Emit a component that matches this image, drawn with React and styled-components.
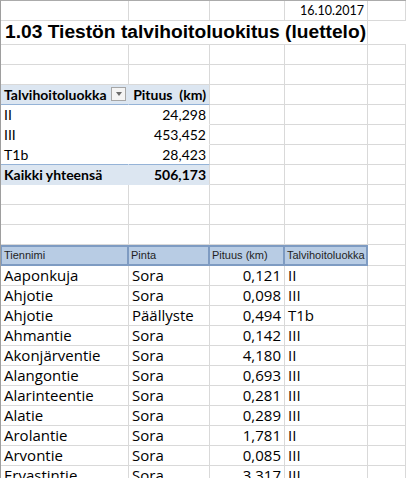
import styled, { createGlobalStyle } from "styled-components";

const GlobalStyle = createGlobalStyle`
  html, body {
    margin: 0;
    padding: 0;
    background: #fff;
    overflow: hidden;
  }
`;

const Sheet = styled.div`
  width: 406px;
  height: 478px;
  overflow: hidden;
  border-top: 1px solid #ababab;
  border-left: 1px solid #9e9e9e;
  box-sizing: border-box;
  font-family: Lato, "Liberation Sans", sans-serif;
  color: #000;
`;

const Row = styled.div`
  display: grid;
  grid-template-columns: 128px 81px 75px 83px 1fr;
  height: ${(p) => p.h || 20}px;
`;

const Cell = styled.div`
  box-sizing: border-box;
  display: flex;
  align-items: flex-end;
  justify-content: ${(p) => (p.right ? "flex-end" : "flex-start")};
  padding: 0 3px 2px 3px;
  border-right: 1px solid #d9d9d9;
  border-bottom: 1px solid #d9d9d9;
  font-size: ${(p) => p.size || 14}px;
  font-weight: ${(p) => (p.bold ? 700 : 400)};
  white-space: nowrap;
  overflow: visible;
  min-width: 0;
  line-height: 1;
`;

const DataCell = styled(Cell)`
  font-family: "Open Sans", Lato, sans-serif;
  font-size: 15px;
  padding-bottom: 0;
  line-height: 19px;
  align-items: center;
`;

const Title = styled(Cell)`
  grid-column: 1 / span 5;
  border-right: none;
  font-family: "Liberation Sans", Arial, sans-serif;
  font-size: 19.2px;
  font-weight: 700;
  padding: 0 4px 3px 4px;
  position: relative;
  &::after {
    content: "";
    position: absolute;
    right: ${406 - 368}px;
    top: 0;
    bottom: 0;
    border-right: 1px solid #d9d9d9;
  }
`;

const PivotCell = styled(Cell)`
  background: ${(p) => (p.band ? "#dce6f1" : "#fff")};
  border-right-color: ${(p) => (p.last ? "#d9d9d9" : "transparent")};
  border-bottom-color: ${(p) => (p.line ? "#95b3d7" : p.band ? "#dce6f1" : "#fff")};
  font-size: 14px;
`;

const FilterButton = styled.span`
  position: absolute;
  right: 2px;
  top: 2px;
  width: 15px;
  height: 14px;
  box-sizing: border-box;
  border: 1px solid #a6a6a6;
  background: #f4f4f4;
  display: flex;
  align-items: center;
  justify-content: center;
  &::before {
    content: "";
    border-left: 3.5px solid transparent;
    border-right: 3.5px solid transparent;
    border-top: 4px solid #6b6b6b;
  }
`;

const PivotHead = styled(PivotCell)`
  position: relative;
`;

const HeadCell = styled(Cell)`
  background: #b8cce4;
  border-top: 2px solid #7e9bc2;
  border-bottom: 2px solid #7e9bc2;
  border-right: 2px solid #7e9bc2;
  border-left: ${(p) => (p.first ? "2px solid #7e9bc2" : "none")};
  margin-left: ${(p) => (p.first ? "-1px" : "0")};
  font-family: "Liberation Sans", Tahoma, sans-serif;
  font-size: 11px;
  color: #1f1f1f;
  align-items: center;
  padding: 0 2px;
`;

const pivot = [
  ["II", "24,298"],
  ["III", "453,452"],
  ["T1b", "28,423"],
];

const roads = [
  ["Aaponkuja", "Sora", "0,121", "II"],
  ["Ahjotie", "Sora", "0,098", "III"],
  ["Ahjotie", "Päällyste", "0,494", "T1b"],
  ["Ahmantie", "Sora", "0,142", "III"],
  ["Akonjärventie", "Sora", "4,180", "II"],
  ["Alangontie", "Sora", "0,693", "III"],
  ["Alarinteentie", "Sora", "0,281", "III"],
  ["Alatie", "Sora", "0,289", "III"],
  ["Arolantie", "Sora", "1,781", "II"],
  ["Arvontie", "Sora", "0,085", "III"],
  ["Ervastintie", "Sora", "3,317", "III"],
];

const Empty = () => (
  <>
    <Cell />
    <Cell />
    <Cell />
    <Cell />
    <Cell />
  </>
);

export default function App() {
  return (
    <>
      <GlobalStyle />
      <Sheet>
        <Row h={20}>
          <Cell />
          <Cell />
          <Cell />
          <Cell right size={12.5} style={{ paddingBottom: 3 }}>
            16.10.2017
          </Cell>
          <Cell />
        </Row>
        <Row h={24}>
          <Title>1.03 Tiestön talvihoitoluokitus (luettelo)</Title>
        </Row>
        <Row>
          <Empty />
        </Row>
        <Row>
          <Empty />
        </Row>
        <Row>
          <PivotHead bold band line>
            Talvihoitoluokka
            <FilterButton />
          </PivotHead>
          <PivotCell bold band line last right>
            Pituus&nbsp;&nbsp;(km)
          </PivotCell>
          <Cell />
          <Cell />
          <Cell />
        </Row>
        {pivot.map(([k, v], i) => (
          <Row key={k}>
            <PivotCell line={i === pivot.length - 1}>{k}</PivotCell>
            <PivotCell last right line={i === pivot.length - 1}>
              {v}
            </PivotCell>
            <Cell />
            <Cell />
            <Cell />
          </Row>
        ))}
        <Row>
          <PivotCell bold band>
            Kaikki yhteensä
          </PivotCell>
          <PivotCell bold band last right>
            506,173
          </PivotCell>
          <Cell />
          <Cell />
          <Cell />
        </Row>
        <Row>
          <Empty />
        </Row>
        <Row>
          <Empty />
        </Row>
        <Row>
          <Empty />
        </Row>
        <Row h={21}>
          <HeadCell first>Tiennimi</HeadCell>
          <HeadCell>Pinta</HeadCell>
          <HeadCell>Pituus (km)</HeadCell>
          <HeadCell>Talvihoitoluokka</HeadCell>
          <Cell />
        </Row>
        {roads.map((r, i) => (
          <Row key={i}>
            <DataCell>{r[0]}</DataCell>
            <DataCell>{r[1]}</DataCell>
            <DataCell right>{r[2]}</DataCell>
            <DataCell>{r[3]}</DataCell>
            <Cell />
          </Row>
        ))}
      </Sheet>
    </>
  );
}
